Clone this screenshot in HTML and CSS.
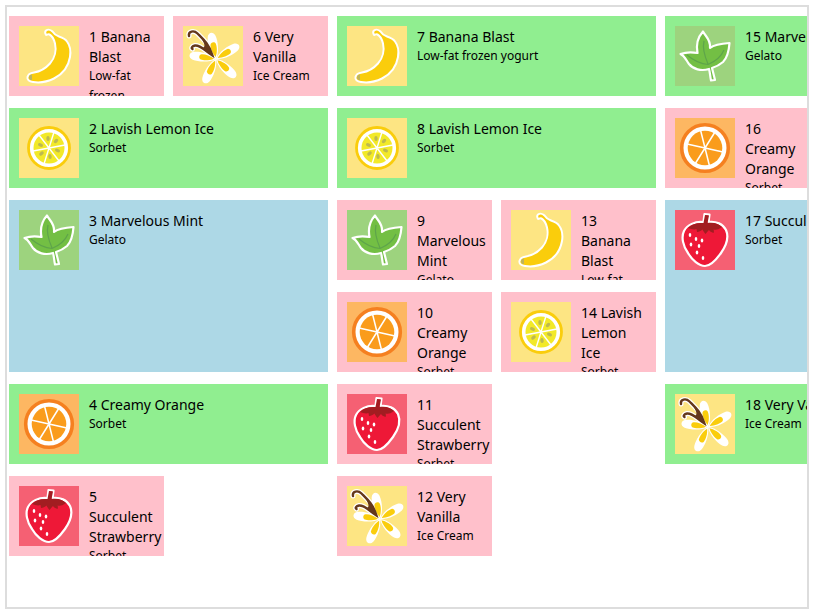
FILE: index.html
```html
<!DOCTYPE html>
<html lang="en">
<head>
<meta charset="utf-8">
<title>Ice cream list</title>
<link rel="stylesheet" href="styles.css">
</head>
<body>
<svg class="sprite" aria-hidden="true">
  <symbol id="banana" viewBox="0 0 60 60">
    <rect width="60" height="60" fill="#fde583"/>
    <path d="M27 4.500C29 3.200 32 3.800 33.500 5.500C35 8 37 9.500 40 10.500C43 11.500 46 12.500 48 15.500C51 19.500 52 25 51 31C49.500 40 44 48 35 52.500C28 56 20 57 14 56C10 55.500 8 53.500 8.500 51C9 48.500 12 47 15 46.500C21 45.500 27 42 31 37.500C36 32 37.500 24 36 17.500C35 13.500 32.500 9.500 30.500 8.500C28.500 7.500 27.500 10 26.800 8.500C26 7 26 5.500 27 4.500Z" fill="#facd0c" stroke="#fff" stroke-width="2" stroke-linejoin="round"/>
    <path d="M10.500 49.500Q13 48 13 49L13 54Q10 54.500 10 51Z" fill="#bdb45f"/>
  </symbol>
  <symbol id="lemon" viewBox="0 0 60 60">
    <rect width="60" height="60" fill="#fde583"/>
    <circle cx="30" cy="30" r="20.500" fill="#fff" stroke="#facd0c" stroke-width="2.800"/>
    <circle cx="30" cy="30" r="15.500" fill="#f2e929"/>
    <g fill="#bdb950">
      <ellipse cx="29" cy="20.500" rx="1.700" ry="2.600" transform="rotate(-5 29 20.500)"/>
      <ellipse cx="37" cy="23" rx="1.700" ry="2.600" transform="rotate(45 37 23)"/>
      <ellipse cx="38.500" cy="32.500" rx="1.700" ry="2.600" transform="rotate(-70 38.500 32.500)"/>
      <ellipse cx="31" cy="38.500" rx="1.700" ry="2.600" transform="rotate(-8 31 38.500)"/>
      <ellipse cx="22.500" cy="35.500" rx="1.700" ry="2.600" transform="rotate(50 22.500 35.500)"/>
      <ellipse cx="21.500" cy="27" rx="1.700" ry="2.600" transform="rotate(-70 21.500 27)"/>
    </g>
    <path d="M35 14L25 46M46 27L14 33M40 43L20 17" stroke="#fff" stroke-width="1.400"/>
  </symbol>
  <symbol id="orange" viewBox="0 0 60 60">
    <rect width="60" height="60" fill="#fdb762"/>
    <circle cx="30" cy="30" r="23.300" fill="#fff" stroke="#f58020" stroke-width="3.600"/>
    <circle cx="30" cy="30" r="17.300" fill="#fa9c1c"/>
    <path d="M25.500 12L34.500 48M12 26L48 34M40 14L20 46" stroke="#fff" stroke-width="1.500"/>
  </symbol>
  <symbol id="mint" viewBox="0 0 60 60">
    <rect width="60" height="60" fill="#9dd37e"/>
    <path d="M28 5.500C31 11 36 14 35 22C40 18 47 17.500 54.500 17C54 24 53 31 48 36C44 39.500 40 41 37 42C38 46 39 50 40 54L36 54.500C35 50 35 46 34 43C26 45.500 18 43 14 38C11 34 10 30 5.500 28C11 26 17 26 22.500 27C21 19 23 11 28 5.500Z" fill="#73bf44" stroke="#fff" stroke-width="2.200" stroke-linejoin="round"/>
    <path d="M29 15C27 23 30 31 33 38M12 29C18 34 25 38 33 38.500C39 36 46 31 49 24" fill="none" stroke="#5ea44b" stroke-width="1.200"/>
  </symbol>
  <symbol id="strawberry" viewBox="0 0 60 60">
    <rect width="60" height="60" fill="#f56073"/>
    <path d="M29.500 4L34.500 4.500L33.500 12C41 11 48 14 51 20C54 27 51 36 46 43C41 50 36 56 30 56C24 56 17 50 13 43C8 36 6 27 9 21C12 15 20 11 28.500 12Z" fill="#ee1837" stroke="#fff" stroke-width="2.200" stroke-linejoin="round"/>
    <path d="M30 5L34 5.500L32.500 13C39 12 44 14 47 17C43 20 41 20 38.500 19.500C39 21 39 22 38.500 23C36 22 35 21.500 34 20C33 21 32 22 30.500 24C29 22 28 21 27.500 19.500C26 21 24 22 22 22L21.500 19C19 20 16 19 13 18C17 14 22 12.500 28.500 13Z" fill="#a21d21"/>
    <g fill="#fff">
      <ellipse cx="15" cy="25" rx="1.300" ry="1.900"/><ellipse cx="21" cy="29" rx="1.300" ry="1.900"/>
      <ellipse cx="27" cy="30.500" rx="1.300" ry="1.900"/><ellipse cx="16" cy="34.500" rx="1.300" ry="1.900"/>
      <ellipse cx="24" cy="36" rx="1.300" ry="1.900"/><ellipse cx="22" cy="42.500" rx="1.300" ry="1.900"/>
      <ellipse cx="28" cy="48" rx="1.300" ry="1.900"/>
    </g>
  </symbol>
  <g id="petal">
    <path d="M0 0C6 -4.500 17 -5.500 23 -4C28 -2.500 28 2.500 23 4C17 5.500 6 4.500 0 0Z" fill="#fff"/>
    <path d="M2 0C6 -2.500 12 -3.500 15 -2.700C17.500 -2 17.500 2 15 2.700C12 3.500 6 2.500 2 0Z" fill="#facd0c"/>
  </g>
  <symbol id="vanilla" viewBox="0 0 60 60">
    <rect width="60" height="60" fill="#fde583"/>
    <path d="M6 10C5 5 11 4 14.500 7.500C20 13 26 18 29.500 29C22 25 18 19 12 19.500C9 20 8 22 9.500 23" fill="none" stroke="#fff" stroke-width="5" stroke-linecap="round"/>
    <use href="#petal" transform="translate(33 33) rotate(-101)"/>
    <use href="#petal" transform="translate(33 33) rotate(-31)"/>
    <use href="#petal" transform="translate(33 33) rotate(43)"/>
    <use href="#petal" transform="translate(33 33) rotate(116)"/>
    <use href="#petal" transform="translate(33 33) rotate(188)"/>
    <path d="M6 10C5 5 11 4 14.500 7.500C20 13 26 18 29.500 29.500C22 25 18 19 12 19.500C9 20 8 22 9.500 23" fill="none" stroke="#64381c" stroke-width="2.400" stroke-linecap="round"/>
    <path d="M14.500 7.500C21 13 26 19 29.500 29.500C25 28 22 24 18 21.500C24 23 22 16 14.500 7.500Z" fill="#64381c"/>
  </symbol>
</svg>

<main class="list-view">
  <ul class="group">
    <li class="item small"><svg class="picture"><use href="#banana"/></svg><div class="detail"><h2>1 Banana Blast</h2><p>Low-fat frozen yogurt</p></div></li>
    <li class="item medium"><svg class="picture"><use href="#lemon"/></svg><div class="detail"><h2>2 Lavish Lemon Ice</h2><p>Sorbet</p></div></li>
    <li class="item large"><svg class="picture"><use href="#mint"/></svg><div class="detail"><h2>3 Marvelous Mint</h2><p>Gelato</p></div></li>
    <li class="item medium"><svg class="picture"><use href="#orange"/></svg><div class="detail"><h2>4 Creamy Orange</h2><p>Sorbet</p></div></li>
    <li class="item small"><svg class="picture"><use href="#strawberry"/></svg><div class="detail"><h2>5 Succulent Strawberry</h2><p>Sorbet</p></div></li>
    <li class="item small"><svg class="picture"><use href="#vanilla"/></svg><div class="detail"><h2>6 Very Vanilla</h2><p>Ice Cream</p></div></li>
  </ul>
  <ul class="group">
    <li class="item medium"><svg class="picture"><use href="#banana"/></svg><div class="detail"><h2>7 Banana Blast</h2><p>Low-fat frozen yogurt</p></div></li>
    <li class="item medium"><svg class="picture"><use href="#lemon"/></svg><div class="detail"><h2>8 Lavish Lemon Ice</h2><p>Sorbet</p></div></li>
    <li class="item small"><svg class="picture"><use href="#mint"/></svg><div class="detail"><h2>9 Marvelous Mint</h2><p>Gelato</p></div></li>
    <li class="item small"><svg class="picture"><use href="#orange"/></svg><div class="detail"><h2>10 Creamy Orange</h2><p>Sorbet</p></div></li>
    <li class="item small"><svg class="picture"><use href="#strawberry"/></svg><div class="detail"><h2>11 Succulent Strawberry</h2><p>Sorbet</p></div></li>
    <li class="item small"><svg class="picture"><use href="#vanilla"/></svg><div class="detail"><h2>12 Very Vanilla</h2><p>Ice Cream</p></div></li>
    <li class="item small"><svg class="picture"><use href="#banana"/></svg><div class="detail"><h2>13 Banana Blast</h2><p>Low-fat frozen yogurt</p></div></li>
    <li class="item small"><svg class="picture"><use href="#lemon"/></svg><div class="detail"><h2>14 Lavish Lemon Ice</h2><p>Sorbet</p></div></li>
  </ul>
  <ul class="group">
    <li class="item medium"><svg class="picture"><use href="#mint"/></svg><div class="detail"><h2>15 Marvelous Mint</h2><p>Gelato</p></div></li>
    <li class="item small"><svg class="picture"><use href="#orange"/></svg><div class="detail"><h2>16 Creamy Orange</h2><p>Sorbet</p></div></li>
    <li class="item large"><svg class="picture"><use href="#strawberry"/></svg><div class="detail"><h2>17 Succulent Strawberry</h2><p>Sorbet</p></div></li>
    <li class="item medium"><svg class="picture"><use href="#vanilla"/></svg><div class="detail"><h2>18 Very Vanilla</h2><p>Ice Cream</p></div></li>
  </ul>
</main>
</body>
</html>
```
FILE: styles.css
```css
* {
  box-sizing: border-box;
  margin: 0;
  padding: 0;
}

body {
  display: flex;
  min-height: 100vh;
  padding: 5px 6px 5px 5px;
  background: #fff;
  color: #000;
  font-family: "Noto Sans", "Open Sans", sans-serif;
}

.sprite {
  position: absolute;
  width: 0;
  height: 0;
}

.list-view {
  flex: 1;
  min-width: 0;
  display: flex;
  align-items: flex-start;
  gap: 9px;
  padding: 9px 2px;
  border: 2px solid #ddd;
  overflow: hidden;
}

.group {
  flex: none;
  display: grid;
  grid-template-columns: repeat(2, 155px);
  grid-template-rows: repeat(6, 80px);
  grid-auto-flow: column;
  gap: 12px 9px;
  list-style: none;
}

.item {
  display: flex;
  align-items: flex-start;
  gap: 10px;
  padding: 10px;
  overflow: hidden;
}

.small {
  background: #ffc0cb;
}

.medium {
  grid-column: span 2;
  background: #90ee90;
}

.large {
  grid-column: span 2;
  grid-row: span 2;
  background: #add8e6;
}

.picture {
  flex: none;
  width: 60px;
  height: 60px;
}

.detail {
  flex: 1;
  min-width: 0;
  padding-top: 1px;
}

h2 {
  font-size: 14px;
  font-weight: 400;
  line-height: 20px;
}

p {
  margin-top: -1px;
  font-size: 12px;
  line-height: 20px;
}
```
